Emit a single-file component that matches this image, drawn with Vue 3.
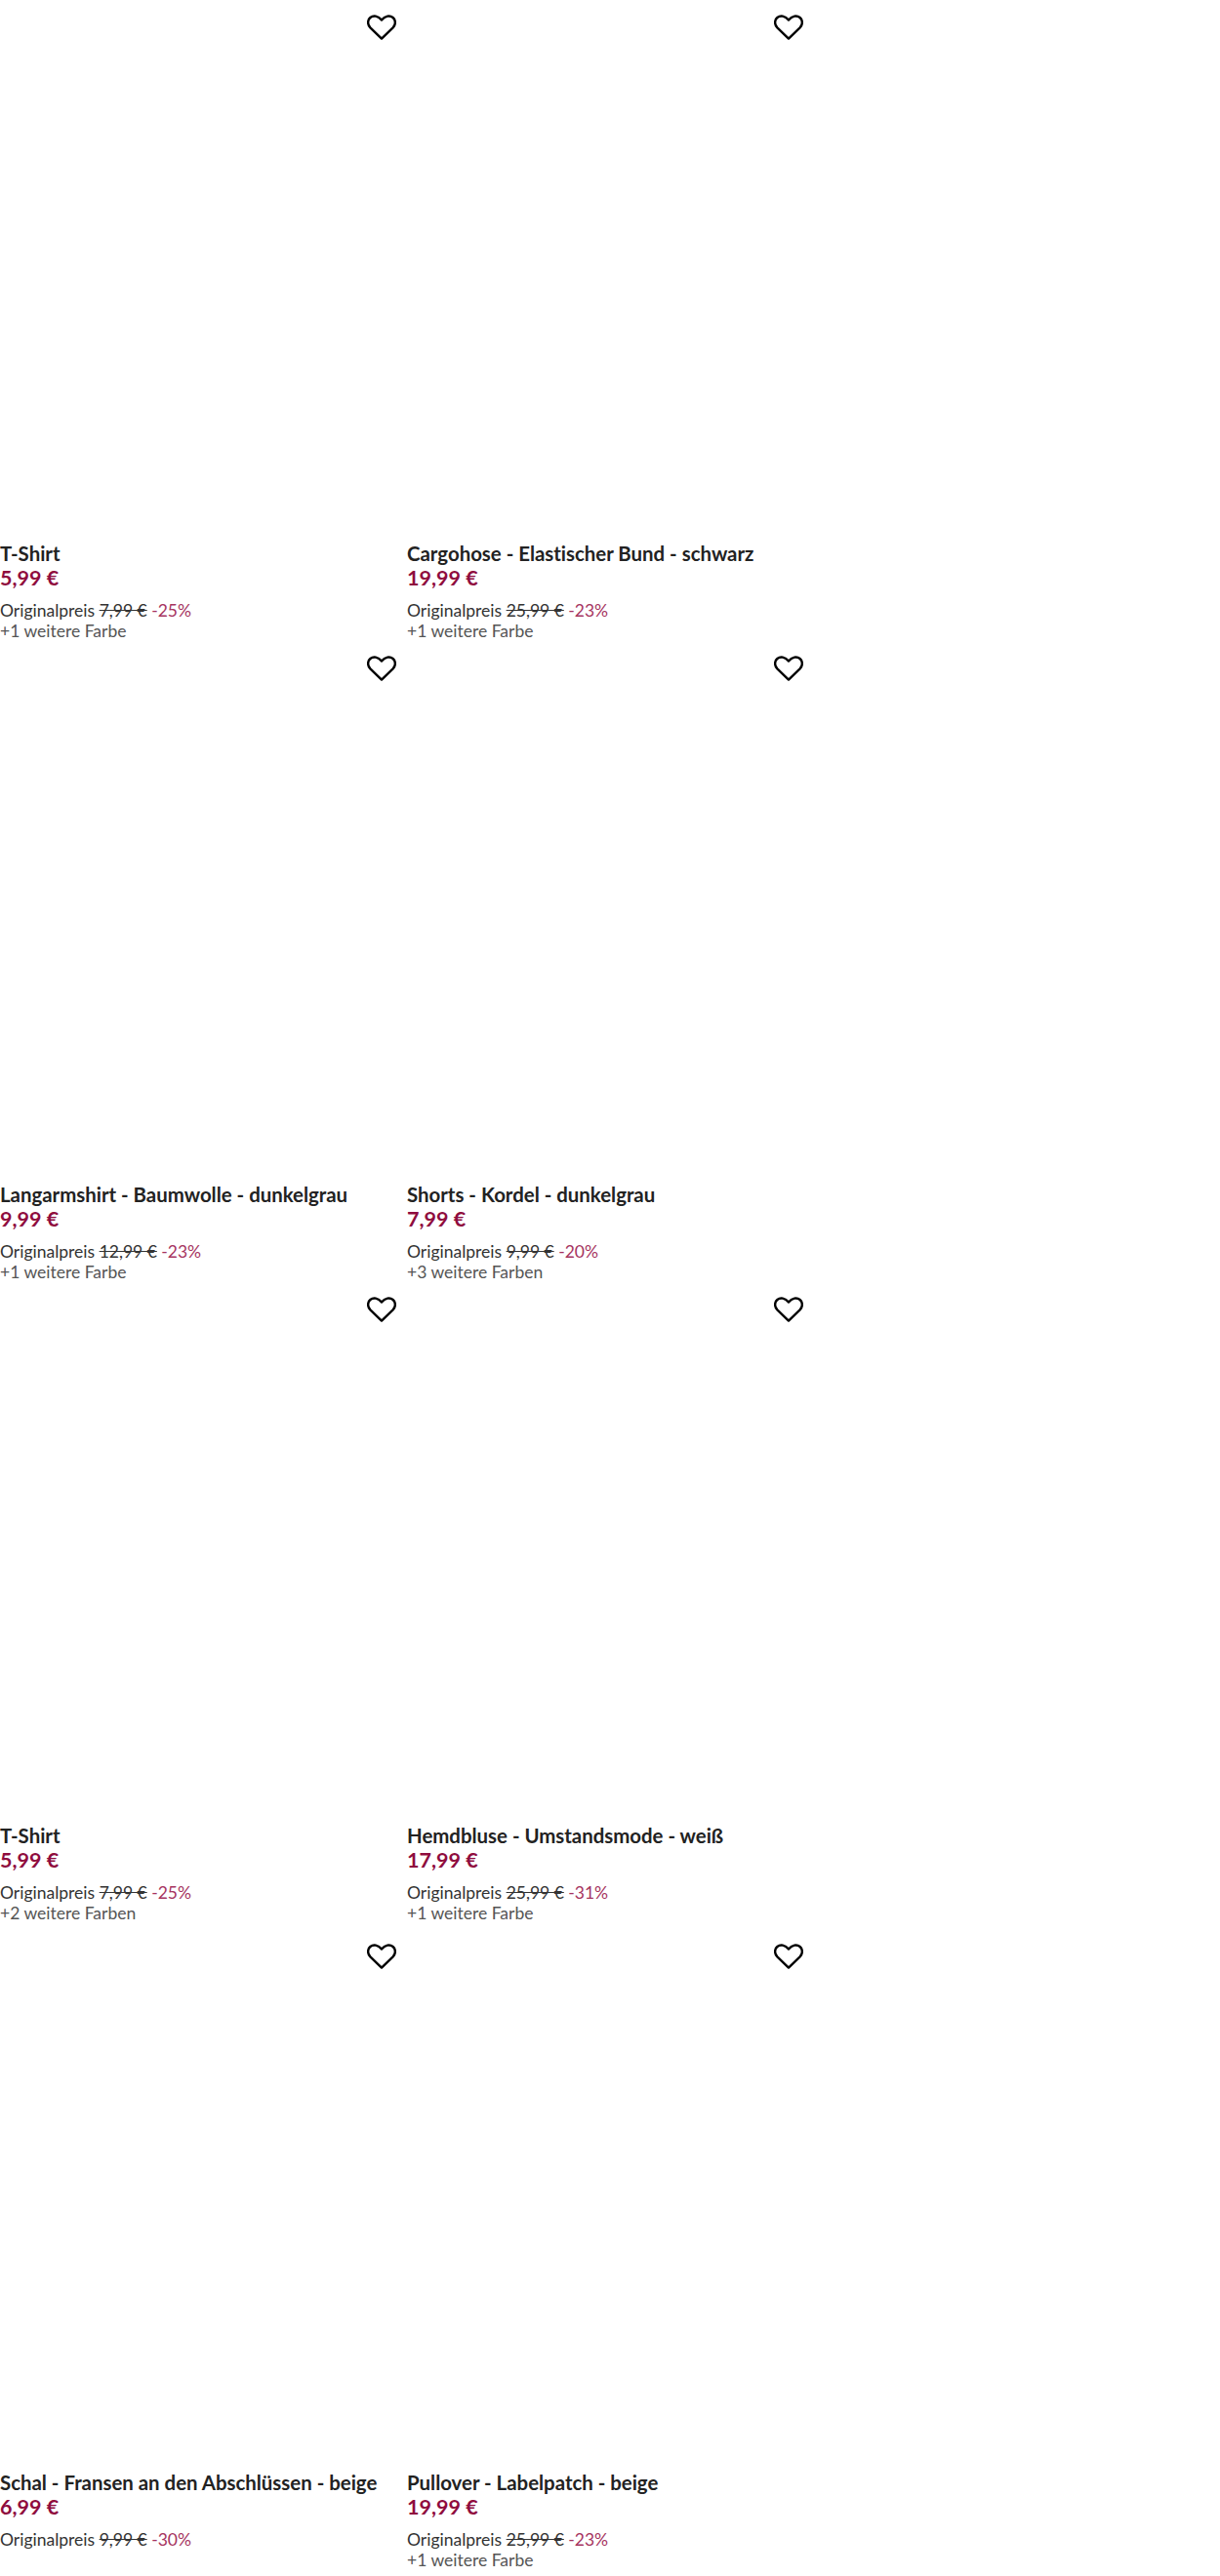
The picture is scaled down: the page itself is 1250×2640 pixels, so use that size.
<template>
  <div class="grid">
    <div v-for="(item, i) in items" :key="i" class="card" :class="{ 'last-row': i >= 6 }">
      <div class="image">
        <svg class="heart" viewBox="0 0 30 26" fill="none" stroke="#000" stroke-width="2.4" stroke-linejoin="round">
          <path d="M15 24.6 3.4 13.4C.3 10.200.4 5.400 3.400 3 6.500.5 11.500 1 15 5.600 18.500 1 23.500.5 26.600 3 29.600 5.400 29.700 10.200 26.600 13.400Z" />
        </svg>
      </div>
      <div class="title">{{ item.title }}</div>
      <div class="price">{{ item.price }}</div>
      <div class="original">
        Originalpreis <s>{{ item.original }}</s> <span class="discount">{{ item.discount }}</span>
      </div>
      <div class="colors">{{ item.colors }}</div>
    </div>
  </div>
</template>

<script setup>
const items = [
  { title: 'T-Shirt', price: '5,99 €', original: '7,99 €', discount: '-25%', colors: '+1 weitere Farbe' },
  { title: 'Cargohose - Elastischer Bund - schwarz', price: '19,99 €', original: '25,99 €', discount: '-23%', colors: '+1 weitere Farbe' },
  { title: 'Langarmshirt - Baumwolle - dunkelgrau', price: '9,99 €', original: '12,99 €', discount: '-23%', colors: '+1 weitere Farbe' },
  { title: 'Shorts - Kordel - dunkelgrau', price: '7,99 €', original: '9,99 €', discount: '-20%', colors: '+3 weitere Farben' },
  { title: 'T-Shirt', price: '5,99 €', original: '7,99 €', discount: '-25%', colors: '+2 weitere Farben' },
  { title: 'Hemdbluse - Umstandsmode - weiß', price: '17,99 €', original: '25,99 €', discount: '-31%', colors: '+1 weitere Farbe' },
  { title: 'Schal - Fransen an den Abschlüssen - beige', price: '6,99 €', original: '9,99 €', discount: '-30%', colors: '' },
  { title: 'Pullover - Labelpatch - beige', price: '19,99 €', original: '25,99 €', discount: '-23%', colors: '+1 weitere Farbe' }
]
</script>

<style>
body {
  background: #fff;
}
</style>

<style scoped>
.grid {
  display: grid;
  grid-template-columns: 407px 407px;
  column-gap: 10px;
  font-family: Lato, sans-serif;
  font-variant-ligatures: none;
  color: #222;
}

.card {
  height: 657px;
}

.card.last-row {
  padding-top: 6px;
}

.image {
  position: relative;
  height: 555px;
}

.heart {
  position: absolute;
  top: 14.5px;
  right: 1px;
  width: 30px;
  height: 26px;
}

.title {
  font-size: 20.4px;
  line-height: 24px;
  font-weight: 700;
  white-space: nowrap;
}

.price {
  font-size: 21.5px;
  line-height: 26px;
  font-weight: 700;
  color: #8f0c3e;
}

.original {
  margin-top: 10px;
  font-size: 17.5px;
  line-height: 21px;
  color: #333;
}

.discount {
  color: #a6345f;
}

.colors {
  font-size: 17.5px;
  line-height: 21px;
  color: #555;
}
</style>
